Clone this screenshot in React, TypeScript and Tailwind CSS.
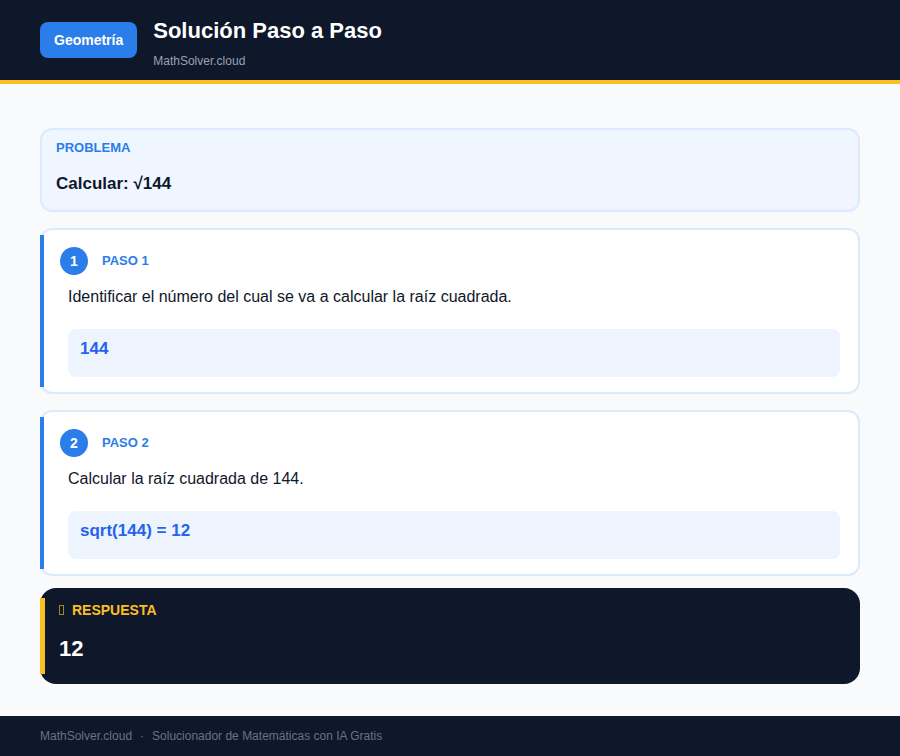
export default function App() {
  const f = { fontFamily: '"Liberation Sans", Arial, sans-serif' };
  const steps = [
    { n: 1, text: "Identificar el número del cual se va a calcular la raíz cuadrada.", math: "144" },
    { n: 2, text: "Calcular la raíz cuadrada de 144.", math: "sqrt(144) = 12" },
  ];
  return (
    <div style={f} className="w-[900px] h-[756px] bg-[#f8fafc] flex flex-col">
      <header className="h-[84px] bg-[#0f172a] border-b-4 border-[#fbbf24] flex items-start px-10 pt-[18px] gap-4 shrink-0">
        <div className="mt-1 h-9 px-[14px] rounded-lg bg-[#2b7de9] text-white font-bold text-sm flex items-center">Geometría</div>
        <div>
          <div className="text-white font-bold text-[22px] leading-[26px]">Solución Paso a Paso</div>
          <div className="text-[#94a3b8] text-xs mt-[9px]">MathSolver.cloud</div>
        </div>
      </header>
      <main className="flex-1 px-10 pt-11 flex flex-col gap-4">
        <div className="h-[84px] rounded-xl border-2 border-[#dbeafe] bg-[#eff6ff] px-[14px] pt-2">
          <div className="text-[#2b7de9] font-bold text-[13px]">PROBLEMA</div>
          <div className="text-[#0f172a] font-bold text-[17px] mt-[13px]">Calcular: √144</div>
        </div>
        {steps.map((s) => (
          <div key={s.n} className="h-[166px] rounded-xl border-2 border-[#dbeafe] bg-white py-[5px] flex">
            <div className="w-1 bg-[#2b7de9] -ml-[2px] shrink-0" />
            <div className="flex-1 pl-4 pr-[18px] pt-[12px]">
              <div className="flex items-center gap-[14px]">
                <div className="w-7 h-7 rounded-full bg-[#2b7de9] text-white font-bold text-sm flex items-center justify-center">{s.n}</div>
                <div className="text-[#2b7de9] font-bold text-[13px]">PASO {s.n}</div>
              </div>
              <div className="text-[#0f172a] text-base mt-[10px] pl-2">{s.text}</div>
              <div className="ml-2 mt-5 h-12 rounded-lg bg-[#eef4fe] px-3 pt-[7px] text-[#2563eb] font-bold text-[17px]">{s.math}</div>
            </div>
          </div>
        ))}
        <div className="h-24 -mt-1 rounded-2xl bg-[#0f172a] py-[10px] flex">
          <div className="w-[5px] bg-[#fbbf24] shrink-0" />
          <div className="pl-[14px] pt-[2px]">
            <div className="flex items-center gap-2 text-[#fbbf24] font-bold text-sm">
              <span className="inline-block w-[5px] h-[10px] border border-[#a3852a]" />RESPUESTA
            </div>
            <div className="text-white font-bold text-[22px] mt-[12px]">12</div>
          </div>
        </div>
      </main>
      <footer className="h-10 bg-[#0f172a] px-10 flex items-center text-[#64748b] text-xs gap-2 shrink-0">
        <span>MathSolver.cloud</span><span>·</span><span>Solucionador de Matemáticas con IA Gratis</span>
      </footer>
    </div>
  );
}
